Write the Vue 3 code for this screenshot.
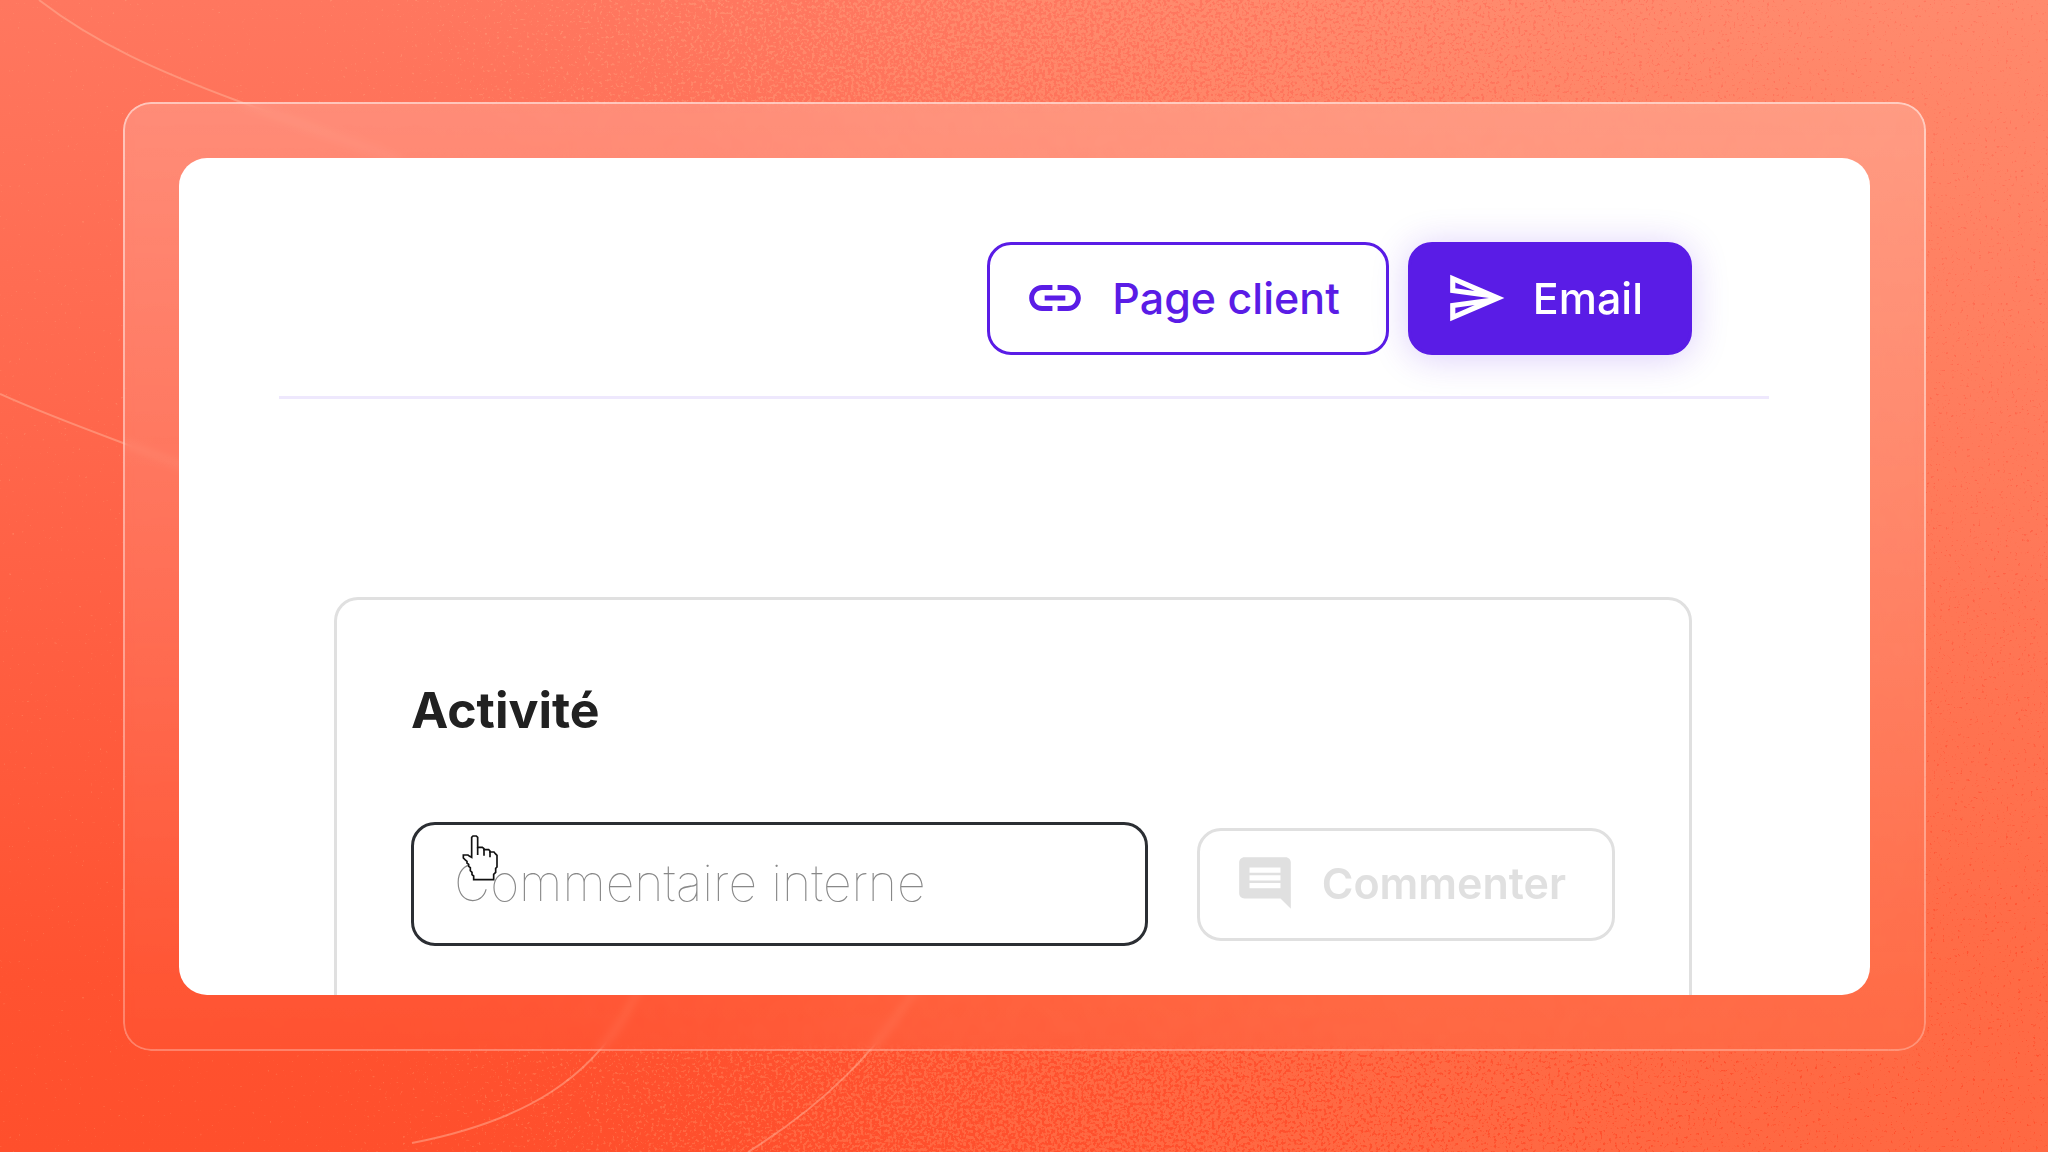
<script setup>
import { ref } from 'vue'

const comment = ref('')
</script>

<template>
  <main class="stage">
    <svg class="backdrop" viewBox="0 0 2048 1152" preserveAspectRatio="xMidYMid slice" aria-hidden="true">
      <defs>
        <linearGradient id="base" x1="0" y1="0" x2="0" y2="1">
          <stop offset="0" stop-color="#ff775f" />
          <stop offset="0.5" stop-color="#ff6145" />
          <stop offset="0.85" stop-color="#ff5230" />
          <stop offset="1" stop-color="#ff4f2c" />
        </linearGradient>
        <linearGradient id="spread" x1="0" y1="0" x2="1" y2="0">
          <stop offset="0.15" stop-color="#fff" stop-opacity="0" />
          <stop offset="0.42" stop-color="#fff" stop-opacity="0.5" />
          <stop offset="0.9" stop-color="#fff" stop-opacity="1" />
        </linearGradient>
        <filter id="grain" x="0" y="0" width="1" height="1" color-interpolation-filters="sRGB">
          <feTurbulence type="fractalNoise" baseFrequency="0.33" numOctaves="2" seed="7" result="noise" />
          <feComposite in="SourceGraphic" in2="noise" operator="arithmetic" k1="0" k2="0.56" k3="1" k4="-0.75" />
          <feComponentTransfer result="dither">
            <feFuncA type="linear" slope="7" intercept="0" />
          </feComponentTransfer>
          <feFlood flood-color="#ffe8b0" flood-opacity="0.17" />
          <feComposite in2="dither" operator="in" />
        </filter>
      </defs>
      <rect width="2048" height="1152" fill="url(#base)" />
      <rect width="2048" height="1152" fill="url(#spread)" filter="url(#grain)" />
      <g fill="none" stroke="#ffb49a" stroke-opacity="0.5" stroke-width="2">
        <path d="M39 0C96 44 160 72 238 101S340 138 400 160" />
        <path d="M0 394C40 412 80 427 123 443S160 457 200 472" />
        <path d="M640 985C600 1080 520 1122 412 1143" />
        <path d="M918 985C878 1050 825 1104 748 1152" />
      </g>
    </svg>

    <div class="frame">
      <section class="panel">
        <header class="toolbar">
          <button class="btn btn-outline" type="button">
            <svg class="icon" viewBox="0 0 24 24" fill="currentColor" aria-hidden="true">
              <path d="M3.9 12c0-1.710 1.390-3.100 3.100-3.100h4V7H7c-2.760 0-5 2.240-5 5s2.240 5 5 5h4v-1.900H7c-1.710 0-3.100-1.390-3.100-3.100zM8 13h8v-2H8v2zm9-6h-4v1.900h4c1.710 0 3.100 1.390 3.100 3.100s-1.390 3.100-3.100 3.100h-4V17h4c2.760 0 5-2.240 5-5s-2.240-5-5-5z" />
            </svg>
            Page client
          </button>
          <button class="btn btn-solid" type="button">
            <svg class="icon" viewBox="0 0 24 24" fill="currentColor" aria-hidden="true">
              <path d="M4.010 6.030l7.510 3.220-7.520-1 .01-2.220m7.500 8.720L4 17.970v-2.220l7.510-1M2.010 3L2 10l15 2-15 2 .01 7L23 12 2.010 3z" />
            </svg>
            Email
          </button>
        </header>

        <section class="card">
          <h2 class="title">Activité</h2>
          <form class="row" @submit.prevent>
            <div class="field">
              <input v-model="comment" class="input" type="text" placeholder="Commentaire interne" aria-label="Commentaire interne" />
              <svg class="cursor" viewBox="37 45 111 138" aria-hidden="true">
                <path
                  d="M66 112V52L70 48H80L84 52V82H98L103 86V89H117L121 93V96H133L137 101L142 106V141L138 145V157L132 163V179H72V168L67 164V157L62 152V143L57 139V133L52 129V124L46 119L41 114V105H55L60 109Z"
                  fill="#fff" stroke="#111" stroke-width="5"
                />
                <path d="M84 82V105M103 87V107M121 94V112" fill="none" stroke="#111" stroke-width="5" />
              </svg>
            </div>
            <button class="btn btn-muted" type="submit" disabled>
              <svg class="icon" viewBox="0 0 24 24" fill="currentColor" aria-hidden="true">
                <path d="M21.990 4c0-1.100-.89-2-1.990-2H4c-1.100 0-2 .9-2 2v12c0 1.100.9 2 2 2h14l4 4-.01-18zM18 14H6v-2h12v2zm0-3H6V9h12v2zm0-3H6V6h12v2z" />
              </svg>
              Commenter
            </button>
          </form>
        </section>
      </section>
    </div>
  </main>
</template>

<style>
body {
  margin: 0;
}
</style>

<style scoped>
.stage {
  position: relative;
  box-sizing: border-box;
  display: flex;
  min-height: 100vh;
  padding: 102px 122px 101px 123px;
  overflow: hidden;
  background: #ff6145;
  font-family: Inter, "Liberation Sans", sans-serif;
}

.backdrop {
  position: absolute;
  inset: 0;
  width: 100%;
  height: 100%;
}

.frame {
  position: relative;
  flex: 1;
  display: flex;
  min-width: 0;
  padding: 56px;
  border-radius: 28px;
  background: linear-gradient(rgba(255, 255, 255, 0.18), rgba(255, 255, 255, 0.01));
  backdrop-filter: blur(5px);
}

.frame::before {
  content: "";
  position: absolute;
  inset: 0;
  padding: 2px;
  border-radius: 28px;
  background: linear-gradient(rgba(255, 255, 255, 0.5), rgba(255, 255, 255, 0.28));
  mask: linear-gradient(#000 0 0) content-box exclude, linear-gradient(#000 0 0);
  pointer-events: none;
}

.panel {
  flex: 1;
  display: flex;
  flex-direction: column;
  min-width: 0;
  border-radius: 28px;
  background: #fff;
  overflow: hidden;
}

.toolbar {
  display: flex;
  justify-content: flex-end;
  gap: 19px;
  margin: 0 101px 0 100px;
  padding: 84px 77px 41px 0;
  border-bottom: 3px solid #eee8fd;
}

.btn {
  box-sizing: border-box;
  flex: none;
  display: flex;
  align-items: center;
  gap: 26px;
  height: 113px;
  padding: 0 46px 2px 34px;
  border: 3px solid currentColor;
  border-radius: 24px;
  background: #fff;
  font: 500 43px/56px Inter, "Liberation Sans", sans-serif;
  cursor: pointer;
}

.btn-outline {
  color: #5a1ce6;
}

.btn-solid {
  border-color: #5a1ce6;
  background: #5a1ce6;
  color: #fff;
  box-shadow: 0 3px 36px rgba(90, 28, 230, 0.22);
}

.btn-muted {
  color: #e0e0e0;
  font-weight: 600;
  cursor: default;
}

.icon {
  flex: none;
  width: 62px;
  height: 62px;
}

.card {
  flex: 1;
  margin: 198px 178px 0 155px;
  padding: 80px 74px 49px;
  border: 3px solid #e0e0e0;
  border-bottom: 0;
  border-radius: 24px 24px 0 0;
}

.title {
  margin: 0 0 82px;
  color: #212121;
  font-size: 50px;
  font-weight: 700;
  line-height: 60px;
}

.row {
  display: flex;
  align-items: center;
  gap: 49px;
}

.field {
  position: relative;
  flex: 1;
  min-width: 0;
}

.input {
  display: block;
  box-sizing: border-box;
  width: 100%;
  height: 124px;
  padding: 0 40px 2px;
  border: 3px solid #2b2e33;
  border-radius: 24px;
  outline: none;
  background: #fff;
  color: #212121;
  font: 100 50px/60px Inter, "Liberation Sans", sans-serif;
}

.input::placeholder {
  color: #888;
  opacity: 1;
}

.cursor {
  position: absolute;
  left: 51px;
  top: 13px;
  width: 37px;
  height: 46px;
  pointer-events: none;
}
</style>
